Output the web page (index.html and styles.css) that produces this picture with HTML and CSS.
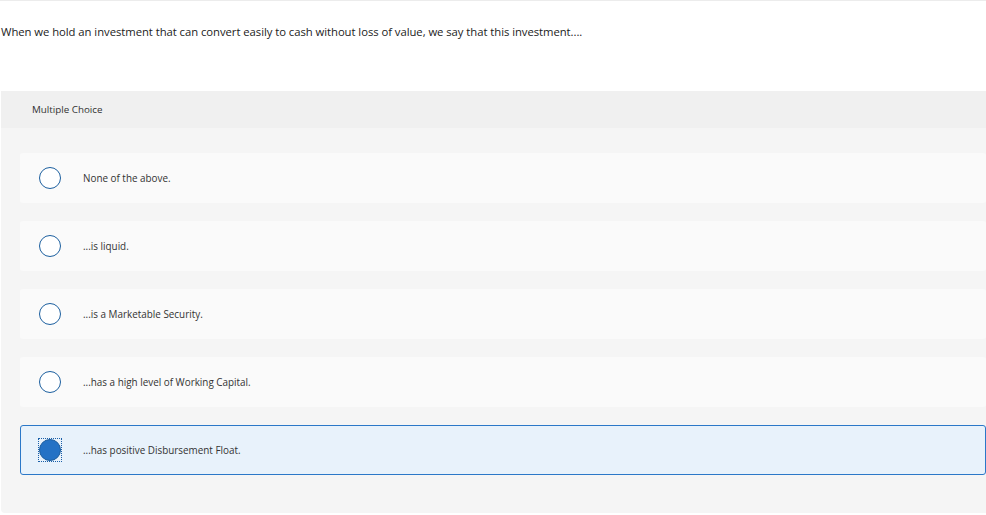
FILE: index.html
```html
<!DOCTYPE html>
<html>
<head>
<meta charset="utf-8">
<link rel="stylesheet" href="styles.css">
</head>
<body>
<div class="page">
  <p class="question">When we hold an investment that can convert easily to cash without loss of value, we say that this investment....</p>
  <section class="panel">
    <div class="panel-header">Multiple Choice</div>
    <div class="options">
      <div class="option"><span class="radio-wrap"><span class="radio"></span></span><span class="label">None of the above.</span></div>
      <div class="option"><span class="radio-wrap"><span class="radio"></span></span><span class="label">...is liquid.</span></div>
      <div class="option"><span class="radio-wrap"><span class="radio"></span></span><span class="label">...is a Marketable Security.</span></div>
      <div class="option"><span class="radio-wrap"><span class="radio"></span></span><span class="label">...has a high level of Working Capital.</span></div>
      <div class="option selected"><span class="radio-wrap"><span class="radio"></span></span><span class="label">...has positive Disbursement Float.</span></div>
    </div>
  </section>
</div>
</body>
</html>
```

FILE: styles.css
```css
html, body {
  margin: 0;
  padding: 0;
  background: #ffffff;
}
body {
  font-family: "Open Sans", "Liberation Sans", sans-serif;
  color: #333333;
  width: 986px;
  height: 515px;
  overflow: hidden;
}
.page {
  border-top: 1px solid #ececec;
}
.question {
  margin: 0;
  padding: 24px 0 0 1px;
  height: 66px;
  font-size: 11.3px;
  line-height: 14px;
  color: #222;
  letter-spacing: -0.05px;
}
.panel {
  margin-left: 1px;
  background: #f5f5f5;
  border-bottom-left-radius: 4px;
  height: 422px;
}
.panel-header {
  height: 37px;
  line-height: 37px;
  background: #f0f0f0;
  padding-left: 31px;
  font-size: 9.8px;
  color: #333;
}
.options {
  display: flex;
  flex-direction: column;
  gap: 18px;
  padding: 25px 0 0 19px;
}
.option {
  display: flex;
  align-items: center;
  height: 50px;
  box-sizing: border-box;
  background: #fafafa;
  border-radius: 3px;
  padding-left: 19px;
}
.radio-wrap {
  display: flex;
  width: 22px;
  height: 22px;
  flex: none;
}
.radio {
  width: 22px;
  height: 22px;
  box-sizing: border-box;
  border: 1.5px solid #1c5f9f;
  border-radius: 50%;
  background: #ffffff;
}
.label {
  margin-left: 22px;
  font-size: 9.9px;
  color: #333;
}
.option.selected {
  background: #e8f2fb;
  border: 1px solid #2b78c8;
  padding-left: 18px;
}
.option.selected .radio {
  background: #2472c5;
  border-color: #1d5e9e;
}
.option.selected .radio-wrap {
  outline: 1px dotted #1a5fa8;
  outline-offset: 0;
}
```
